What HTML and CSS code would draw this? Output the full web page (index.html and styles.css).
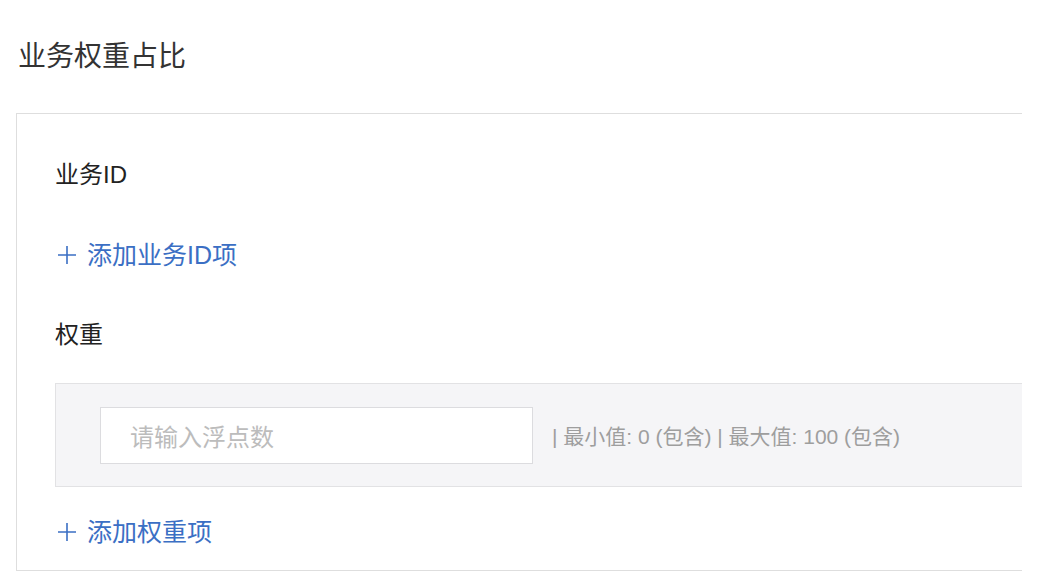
FILE: index.html
```html
<!DOCTYPE html>
<html lang="zh-CN">
<head>
    <meta charset="UTF-8">
    <meta name="viewport" content="width=device-width, initial-scale=1.0">
    <title>业务权重占比</title>
    <link rel="stylesheet" href="styles.css">
</head>
<body>
    <div class="page">
        <h1 class="title">业务权重占比</h1>
        <div class="panel">
            <div class="field-label">业务ID</div>
            <a class="add-link" href="#">
                <svg class="plus" width="20" height="20" viewBox="0 0 20 20"><path d="M10 1v18M1 10h18" stroke="currentColor" stroke-width="1.6" fill="none"/></svg>添加业务ID项
            </a>
            <div class="field-label">权重</div>
            <div class="weight-row">
                <input type="text" class="float-input" placeholder="请输入浮点数">
                <span class="hint">| 最小值: 0 (包含) | 最大值: 100 (包含)</span>
            </div>
            <a class="add-link last" href="#">
                <svg class="plus" width="20" height="20" viewBox="0 0 20 20"><path d="M10 1v18M1 10h18" stroke="currentColor" stroke-width="1.6" fill="none"/></svg>添加权重项
            </a>
        </div>
    </div>
</body>
</html>
```

FILE: styles.css
```css
body {
    margin: 0;
    font-family: "Liberation Sans", "Noto Sans CJK SC", sans-serif;
    background: #fff;
    color: #222;
}
.page {
    padding-left: 16px;
    width: 1006px;
}
.title {
    margin: 0;
    padding: 37px 0 0 2px;
    font-size: 28px;
    font-weight: normal;
    line-height: 40px;
    color: #333;
}
.panel {
    margin-top: 36px;
    border: 1.5px solid #dedede;
    border-right: none;
    padding: 41px 0 18px 38px;
}
.field-label {
    font-size: 24px;
    line-height: 40px;
    color: #222;
}
.add-link {
    display: flex;
    align-items: center;
    margin: 40px 0 40px;
    font-size: 25px;
    line-height: 40px;
    color: #3b6fc4;
    text-decoration: none;
}
.add-link.last {
    margin: 25px 0 0;
}
.plus {
    margin: 0 10px 0 2px;
}
.weight-row {
    display: flex;
    align-items: center;
    gap: 19px;
    margin-top: 28px;
    height: 102px;
    padding-left: 44px;
    background: #f5f5f7;
    border: 1px solid #e2e2e4;
    border-right: none;
}
.float-input {
    box-sizing: border-box;
    width: 433px;
    height: 57px;
    padding: 0 29px;
    border: 1.5px solid #dcdcdf;
    background: #fff;
    font-family: "Noto Sans CJK SC", sans-serif;
    font-size: 24px;
    color: #333;
    outline: none;
}
.float-input::placeholder {
    color: #bcbcbc;
}
.hint {
    font-size: 21px;
    color: #9e9e9e;
}
```
